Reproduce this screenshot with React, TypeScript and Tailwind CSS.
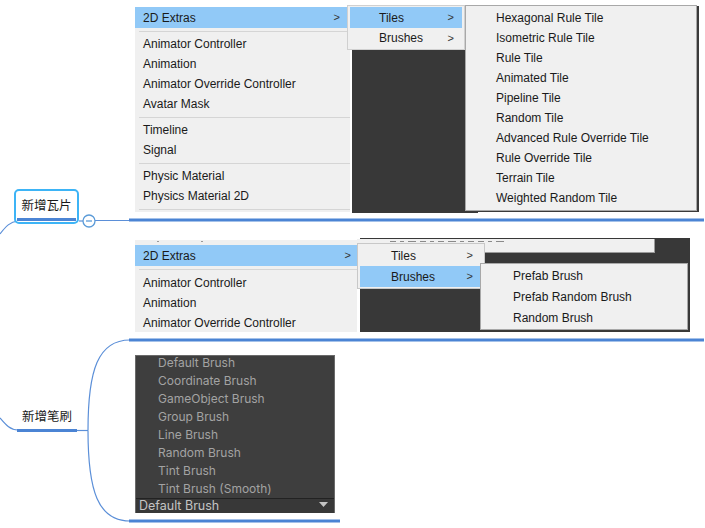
import React from "react";

// ── Shared bits ────────────────────────────────────────────────────────────
const MENU_FONT = "font-['Liberation_Sans',Arial,sans-serif] text-[12px] text-[#1a1a1a]";

function Sep({ h = "h-[6px]" }: { h?: string }) {
  return (
    <div className={`flex ${h} items-center pl-[4px]`}>
      <div className="h-px w-full bg-[#d5d5d5]" />
    </div>
  );
}

function Row({
  label,
  pl,
  hot = false,
  arrow = false,
  pr = "pr-[8px]",
  h = "h-[20px]",
}: {
  label: string;
  pl: string;
  hot?: boolean;
  arrow?: boolean;
  pr?: string;
  h?: string;
}) {
  return (
    <div
      className={`flex ${h} items-center justify-between ${pl} ${pr} leading-none ${
        hot ? "bg-[#91c9f7]" : ""
      }`}
    >
      <span>{label}</span>
      {arrow && <span className="text-[11px] text-[#333]">&gt;</span>}
    </div>
  );
}

const TILES = [
  "Hexagonal Rule Tile",
  "Isometric Rule Tile",
  "Rule Tile",
  "Animated Tile",
  "Pipeline Tile",
  "Random Tile",
  "Advanced Rule Override Tile",
  "Rule Override Tile",
  "Terrain Tile",
  "Weighted Random Tile",
];

const BRUSHES = ["Prefab Brush", "Prefab Random Brush", "Random Brush"];

const PALETTE_BRUSHES = [
  "Default Brush",
  "Coordinate Brush",
  "GameObject Brush",
  "Group Brush",
  "Line Brush",
  "Random Brush",
  "Tint Brush",
  "Tint Brush (Smooth)",
];

// ── Screenshot 1: 2D Extras › Tiles ───────────────────────────────────────
function TilesShot() {
  return (
    <div className={`absolute left-[135px] top-[5px] flex items-start ${MENU_FONT}`}>
      {/* editor window behind the menus */}
      <div className="absolute left-[217px] top-[40px] h-[168px] w-[126px] bg-[#383838]" />

      <div className="relative mt-[2px] h-[205px] w-[215px] overflow-hidden bg-[#f0f0f0]">
        <Row label="2D Extras" pl="pl-[8px]" pr="pr-[10px]" hot arrow h="h-[21px]" />
        <Sep />
        <Row label="Animator Controller" pl="pl-[8px]" />
        <Row label="Animation" pl="pl-[8px]" />
        <Row label="Animator Override Controller" pl="pl-[8px]" />
        <Row label="Avatar Mask" pl="pl-[8px]" />
        <Sep />
        <Row label="Timeline" pl="pl-[8px]" />
        <Row label="Signal" pl="pl-[8px]" />
        <Sep />
        <Row label="Physic Material" pl="pl-[8px]" />
        <Row label="Physics Material 2D" pl="pl-[8px]" />
        <Sep />
      </div>

      <div className="relative -ml-[3px] w-[118px] border border-[#d0d0d0] bg-[#f0f0f0] px-[2px] pt-[1px] pb-[1px]">
        <Row label="Tiles" pl="pl-[29px]" hot arrow h="h-[21px]" />
        <Row label="Brushes" pl="pl-[29px]" arrow />
      </div>

      <div className="relative w-[232px] border border-[#a8a8a8] bg-[#f0f0f0] pt-[2px] pb-[2px] shadow-[2px_1px_0_#3a3a3a]">
        {TILES.map((t) => (
          <Row key={t} label={t} pl="pl-[30px]" />
        ))}
      </div>
    </div>
  );
}

// ── Screenshot 2: 2D Extras › Brushes ─────────────────────────────────────
function BrushesShot() {
  return (
    <div className={`absolute left-[135px] top-[238px] flex items-start ${MENU_FONT}`}>
      {/* editor window behind */}
      <div className="absolute left-[225px] top-0 h-[94px] w-[330px] bg-[#383838]" />
      {/* bottom edge of another menu, its text cut away */}
      <div className="absolute left-[222px] top-[1px] flex h-[14px] w-[298px] items-start gap-[4px] border-b border-r border-[#9a9a9a] bg-[#f0f0f0] pl-[33px] pt-[2px]">
        {[3, 2, 4, 3, 2, 3, 4, 2, 3, 3, 2, 4].map((w, i) => (
          <div key={i} className="h-px bg-[#8a8a8a]" style={{ width: w * 2 }} />
        ))}
      </div>

      <div className="relative mt-[2px] h-[92px] w-[222px] overflow-hidden bg-[#f0f0f0] pt-[5px]">
        <div className="absolute left-[22px] top-[1px] h-px w-[2px] bg-[#999]" />
        <div className="absolute left-[66px] top-[1px] h-px w-[2px] bg-[#999]" />
        <Row label="2D Extras" pl="pl-[8px]" pr="pr-[6px]" hot arrow h="h-[21px]" />
        <Sep h="h-[7px]" />
        <Row label="Animator Controller" pl="pl-[8px]" />
        <Row label="Animation" pl="pl-[8px]" />
        <Row label="Animator Override Controller" pl="pl-[8px]" />
      </div>

      <div className="relative mt-[5px] w-[128px] border border-[#c8c8c8] bg-[#f0f0f0] px-[2px] py-[1px]">
        <Row label="Tiles" pl="pl-[31px]" arrow pr="pr-[9px]" h="h-[21px]" />
        <Row label="Brushes" pl="pl-[31px]" hot arrow pr="pr-[9px]" h="h-[21px]" />
      </div>

      <div className="relative -ml-[5px] mt-[25px] w-[208px] border border-[#a8a8a8] bg-[#f0f0f0] py-[1px] shadow-[1px_1px_0_#3a3a3a]">
        {BRUSHES.map((b) => (
          <Row key={b} label={b} pl="pl-[32px]" h="h-[21px]" />
        ))}
      </div>
    </div>
  );
}

// ── Screenshot 3: brush dropdown (dark editor) ─────────────────────────────
function PaletteShot() {
  return (
    <div className="absolute left-[135px] top-[355px] flex h-[158px] w-[200px] flex-col overflow-hidden border-t border-x border-[#6a6a6a] bg-[#3e3e3e] font-['Inter',sans-serif]">
      <div className="-mt-[2px] flex flex-1 flex-col pl-[22px]">
        {PALETTE_BRUSHES.map((b) => (
          <div key={b} className="flex h-[18px] items-center text-[12px] leading-none text-[#a3a3a3]">
            {b}
          </div>
        ))}
      </div>
      <div className="flex h-[16px] items-end justify-between border-t border-[#222] bg-[#383838] pl-[3px] pr-[6px]">
        <span className="text-[12.5px] leading-[14px] text-[#c4c4c4]">Default Brush</span>
        <svg width="9" height="6" viewBox="0 0 9 6" className="mb-[5px]">
          <path d="M0 0h9L4.5 5z" fill="#c4c4c4" />
        </svg>
      </div>
    </div>
  );
}

// ── Mind-map connectors ───────────────────────────────────────────────────
function Connectors() {
  return (
    <svg
      className="pointer-events-none absolute left-0 top-0"
      width="705"
      height="528"
      viewBox="0 0 705 528"
    >
      <g fill="none" stroke="#5b8fd8" strokeWidth="1.2">
        <path d="M0 234 C6 226 10 222 18 221" />
        <path d="M79 221 H83" />
        <path d="M95 220.5 H129" />
        <path d="M0 418 C6 425 10 430 18 430" />
        <path d="M77 430.5 H88" />
        <path d="M88 430.5 C88 370 98 340 130 340" />
        <path d="M88 430.5 C88 491 98 521 130 521" />
      </g>
      <circle cx="89" cy="221" r="6" fill="#fff" stroke="#5b9bd8" strokeWidth="1.3" />
      <path d="M86 221 H92" stroke="#5b9bd8" strokeWidth="1.3" />
      <g stroke="#4b84d4" strokeWidth="3">
        <path d="M129 220 H704" />
        <path d="M17 430.5 H77" />
        <path d="M129 340 H704" />
        <path d="M129 521 H340" />
      </g>
    </svg>
  );
}

// ── Page ──────────────────────────────────────────────────────────────────
export default function App() {
  return (
    <div className="relative h-[528px] w-[705px] overflow-hidden bg-white">
      <Connectors />
      <TilesShot />
      <BrushesShot />
      <PaletteShot />

      {/* topic node: 新增瓦片 */}
      <div className="absolute left-[14px] top-[189px] flex h-[35px] w-[65px] justify-center rounded-[5px] border-2 border-[#3db4f6] bg-white pt-[8px]">
        <span className="font-['Noto_Sans_CJK_SC',sans-serif] text-[12.5px] leading-none text-[#1a1a1a]">
          新增瓦片
        </span>
        <div className="absolute bottom-[1px] left-[1px] right-[1px] h-[3px] bg-[#4b84d4]" />
      </div>

      {/* topic node: 新增笔刷 */}
      <div className="absolute left-[17px] top-[410px] flex w-[60px] justify-center">
        <span className="font-['Noto_Sans_CJK_SC',sans-serif] text-[12.5px] leading-none text-[#1a1a1a]">
          新增笔刷
        </span>
      </div>
    </div>
  );
}
